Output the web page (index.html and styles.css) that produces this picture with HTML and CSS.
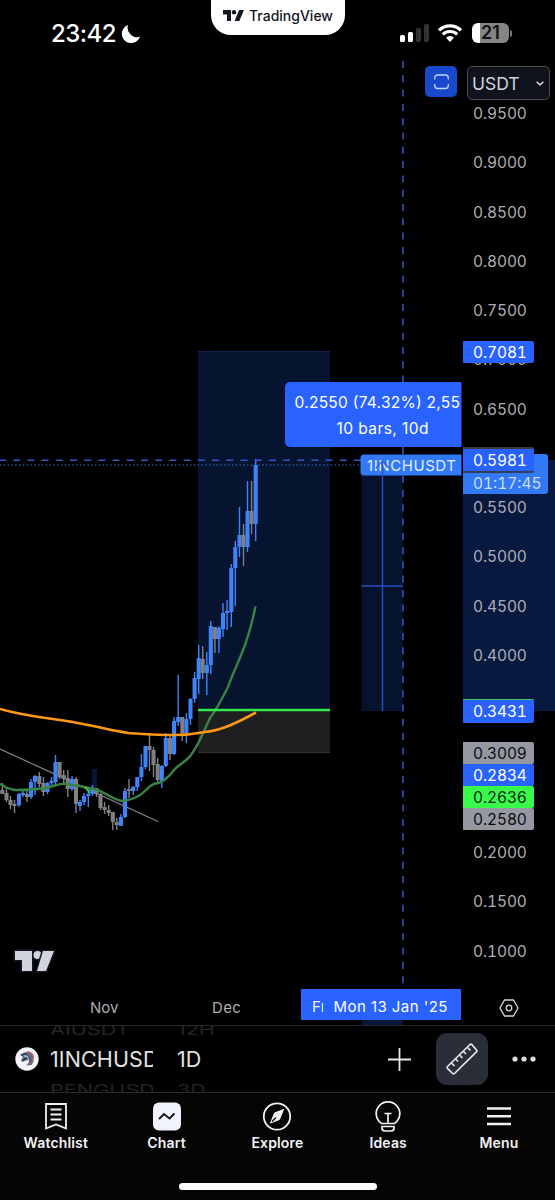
FILE: index.html
```
<!DOCTYPE html>
<html lang="en">
<head>
    <meta charset="UTF-8">
    <meta name="viewport" content="width=device-width, initial-scale=1.0">
    <title>1INCHUSDT Chart</title>
    <link rel="stylesheet" href="styles.css">
</head>
<body>
    <header class="status">
        <div class="clock">
            <span class="time">23:42</span>
            <svg width="20" height="20" viewBox="0 0 20 20"><path d="M7 1A9.3 9.3 0 1 0 19 12.600A9.400 9.400 0 0 1 7 1Z" fill="#fff"/></svg>
        </div>
        <div class="island">
            <svg width="21" height="11" viewBox="0 0 21 11" fill="#131722"><path d="M0 0H8V11H4V4.500H0Z"/><circle cx="11" cy="2.300" r="2.200"/><path d="M16 0H21L16.300 11H11.700Z"/></svg>
            <span>TradingView</span>
        </div>
        <div class="signals">
            <svg width="29" height="19" viewBox="0 0 29 19" fill="#fff"><rect x="0" y="11" width="5" height="7" rx="1.500"/><rect x="8" y="8" width="5" height="10" rx="1.500"/><rect x="16" y="4" width="5" height="14" rx="1.500" fill="#333"/><rect x="24" y="0" width="5" height="18" rx="1.500" fill="#333"/></svg>
            <svg class="wifi" width="24" height="18" viewBox="0 0 24 18" fill="none" stroke="#fff" stroke-width="3.100"><path d="M1 6.300A16 16 0 0 1 23 6.300M4.800 10.300A10.500 10.500 0 0 1 19.200 10.300"/><path d="M8 13.800Q12 10.400 16 13.800L12 18Z" fill="#fff" stroke="none"/></svg>
            <div class="battery">21</div>
            <i class="battery-tip"></i>
        </div>
    </header>

    <main class="chart">
        <svg class="plot" width="463" height="925" viewBox="0 60 463 925">
            <rect x="198" y="351" width="132" height="359" fill="#06142f"/>
            <path d="M198 351.500H330" stroke="#10224c"/>
            <rect x="198" y="710" width="132" height="43" fill="#1f1f21"/>
            <path d="M198 752.500H330" stroke="#343437"/>
            <rect x="361.500" y="460" width="41.500" height="251" fill="#06132f"/>
            <rect x="92" y="769" width="5" height="19" fill="#07163a"/>
            <path d="M0 749L158 821.500" stroke="#858589" stroke-width="1.200"/>
            <g id="candles"></g>
            <path class="ma-fast" d="M0 784C6 787 9 790 17 790C29 790 38 789 46 788C55 786 58 783 66 784C76 785 86 787 94 789C104 791 111 799 122 801C132 800 139 797 145 791C150 786 153 783 159 783C166 780 171 774 174 770C179 764 186 762 191 755C200 743 205 728 210 718C216 710 222 699 228 687C234 670 240 659 245 645C249 634 252 623 255.500 606.500"/>
            <path class="ma-slow" d="M0 709C14 713 25 715 42 717.500C60 720 70 721 88 725C103 728 114 731 128 733C145 734 159 735 174 735C185 735 190 735 205 732C222 730 237 723 256 712.500"/>
            <path d="M198 710H330" stroke="#33e84a" stroke-width="2.500"/>
            <path d="M85 787L90 793" stroke="#2bdf3c" stroke-width="1.500"/>
            <path d="M0 460.300H463" stroke="#3655c8" stroke-width="1.500" stroke-dasharray="7 7.200" stroke-dashoffset="1"/>
            <path d="M0 465H362" stroke="#3b78d0" stroke-width="1.200" stroke-dasharray="1.500 2.300"/>
            <path d="M403 61V985" stroke="#3350bd" stroke-width="1.600" stroke-dasharray="7 7.300"/>
            <path d="M465 454.500H364a3.500 3.500 0 0 0-3.500 3.500v14a3.500 3.500 0 0 0 3.500 3.500h101Z" fill="#3179f5"/>
            <text x="367" y="471" textLength="89" class="symbol-name">1INCHUSDT</text>
            <path d="M382.500 460V711M361.500 586H403" stroke="#2450c7" stroke-width="1.400" fill="none"/>
            <path d="M376 468L382.500 461L389 468" stroke="#2b62dd" stroke-width="1.400" fill="none"/>
            <path d="M465 382H290a5 5 0 0 0-5 5v55a5 5 0 0 0 5 5H465Z" fill="#2962ff"/>
            <text x="294.500" y="408" textLength="165.500" class="measure">0.2550 (74.32%) 2,55</text>
            <text x="336.500" y="434" textLength="92" class="measure">10 bars, 10d</text>
            <rect x="461.500" y="60" width="3" height="925"/>
            <g class="watermark"><path d="M15 951H32V971H22V960H15Z"/><circle cx="37.500" cy="955" r="4"/><path d="M43 951H54L46 971H37Z"/></g>
        </svg>

        <aside class="scale">
            <div class="range"></div>
            <ol class="ticks">
                <li>0.9500</li><li>0.9000</li><li>0.8500</li><li>0.8000</li><li>0.7500</li><li>0.7000</li>
                <li>0.6500</li><li></li><li>0.5500</li><li>0.5000</li><li>0.4500</li><li>0.4000</li>
                <li></li><li></li><li></li><li>0.2000</li><li>0.1500</li><li>0.1000</li>
            </ol>
            <span class="tag high">0.7081</span>
            <span class="tag countdown">01:17:45</span>
            <span class="tag cross">0.5981</span>
            <span class="tag low">0.3431</span>
            <div class="tag-stack">
                <span class="tag grey">0.3009</span>
                <span class="tag">0.2834</span>
                <span class="tag green">0.2636</span>
                <span class="tag grey">0.2580</span>
            </div>
        </aside>

        <div class="controls">
            <button class="fit" type="button">
                <svg width="15" height="16" viewBox="0 0 15 16" fill="none" stroke="#c5d2f7" stroke-width="1.300"><path d="M.7 5.500V4Q.7 1 3.700 1H11.300Q14.300 1 14.300 4V5.500M.7 10V11.500Q.7 14.500 3.700 14.500H11.300Q14.300 14.500 14.300 11.500V10"/></svg>
            </button>
            <button class="currency" type="button">
                <span>USDT</span>
                <svg width="8" height="5" viewBox="0 0 8 5" fill="none" stroke="#e0e3eb" stroke-width="1.300"><path d="M.6 .7L4 3.800L7.400 .7"/></svg>
            </button>
        </div>
    </main>

    <div class="time-axis">
        <span class="month nov">Nov</span>
        <span class="month dec">Dec</span>
        <div class="date-tag"><span class="cut">Fri</span><span>Mon 13 Jan '25</span></div>
        <svg class="settings" width="20" height="18" viewBox="0 0 20 18" fill="none" stroke="#d4d4d7" stroke-width="1.300"><path d="M5.500 1H14.500L19 9L14.500 17H5.500L1 9Z"/><circle cx="10" cy="9" r="2.800"/></svg>
        <i class="date-range"></i>
    </div>

    <div class="toolbar">
        <svg class="coin" width="24" height="24" viewBox="0 0 24 24">
            <circle cx="12" cy="12" r="11.700" fill="#f1f3f8"/>
            <path d="M5 8L9 5.500Q15 3.500 18 9Q20 14 16.500 18L11 18.500L14 15.500Q14 13 11.500 13L8 15L6 13.500L8 10Z" fill="#5c6b80"/>
            <path d="M12 5Q18 5 18.500 11M17 11Q18 14 16 17" fill="none" stroke="#c7505a" stroke-width="1.300"/>
            <path d="M6 8L11 7L14 11M9 13L13 10.500L16 14M7 14L10 11" fill="none" stroke="#1d2b42"/>
            <path d="M9 9L12 9L14 13L12 17" fill="none" stroke="#dfe5ec"/>
        </svg>
        <div class="wheel symbols"><span class="near">AIUSDT</span><span>1INCHUSDT</span><span class="near">PENGUSD</span></div>
        <div class="wheel intervals"><span class="near">12H</span><span>1D</span><span class="near">3D</span></div>
        <svg class="plus" width="23" height="23" viewBox="0 0 23 23" stroke="#e8e8ea" stroke-width="1.800"><path d="M11.500 0V23M0 11.500H23"/></svg>
        <button class="ruler" type="button">
            <svg width="32" height="32" viewBox="0 0 32 32" fill="none" stroke="#e3e5ec" stroke-width="1.700" stroke-linejoin="round"><path d="M1.500 23.500L24 1.500Q25 .7 26 1.700L30.500 7Q31.300 8 30.400 8.800L8.500 30.500Q7.500 31.500 6.600 30.500L1.500 25.300Q.7 24.400 1.500 23.500Z"/><path d="M5.500 20L8.500 23M9.500 16L12 18.500M13.500 12L16.500 15M17.500 8.500L20 11M21.500 4.500L24.500 7.500"/></svg>
        </button>
        <svg width="24" height="6" viewBox="0 0 24 6" fill="#dcdde1"><circle cx="3" cy="3" r="2.600"/><circle cx="12" cy="3" r="2.600"/><circle cx="21" cy="3" r="2.600"/></svg>
    </div>

    <nav class="tabs">
        <a class="tab">
            <svg width="30" height="32" viewBox="0 0 30 32" fill="none" stroke="#f2f2f4" stroke-width="1.800"><path d="M5 3H25V27.500L15 23.500L5 27.500ZM9.500 8.500H20.500M9.500 13.500H20.500M9.500 18.500H20.500"/></svg>
            <span>Watchlist</span>
        </a>
        <a class="tab">
            <svg width="30" height="32" viewBox="0 0 30 32" fill="none"><rect x="1" y="1.500" width="28" height="28" rx="6" fill="#f0f3fa"/><path d="M7 18L12 13L17.500 17.500L22.500 12.500" stroke="#131722" stroke-width="2"/></svg>
            <span>Chart</span>
        </a>
        <a class="tab">
            <svg width="30" height="32" viewBox="0 0 30 32" fill="none"><circle cx="15" cy="15.500" r="13.200" stroke="#f2f2f4" stroke-width="1.800"/><path d="M21.500 8.500L17.500 18.500L8.500 22L12.500 12Z" fill="#f2f2f4" stroke="#f2f2f4"/><path d="M10 20.500L14 16.500" stroke="#050505" stroke-width="1.300"/></svg>
            <span>Explore</span>
        </a>
        <a class="tab">
            <svg width="30" height="32" viewBox="0 0 30 32" fill="none" stroke="#f2f2f4" stroke-width="1.700"><path d="M8.500 22.500A11.800 11.800 0 1 1 21.500 22.500ZM11.500 12.500H18.500M15 12.500V22.500M9 25.500H21V27Q21 30 18 30H12Q9 30 9 27Z"/></svg>
            <span>Ideas</span>
        </a>
        <a class="tab">
            <svg width="30" height="32" viewBox="0 0 30 32" fill="none" stroke="#f2f2f4" stroke-width="2.400"><path d="M3 7.500H27M3 15.200H27M3 23H27"/></svg>
            <span>Menu</span>
        </a>
        <div class="home-bar"></div>
    </nav>

    <script>
        // x, body top, body bottom, wick top, wick bottom, rising
        const candles = [
            [2.3, 790, 794, 783, 794, 0], [6.5, 793, 800, 787, 802, 0], [10.5, 800, 805, 796, 809, 0],
            [14.5, 804, 806, 800, 813, 0], [19, 794, 805, 793, 807, 1], [23, 793, 795, 789, 797, 1],
            [27, 794, 797, 790, 802, 0], [31, 782, 797, 779, 799, 1], [35, 776, 782, 775, 795, 1],
            [39.3, 776, 784, 772, 787, 0], [43.4, 783, 792, 777, 796, 0], [47.5, 783, 792, 782, 794, 1],
            [51.5, 781, 783, 777, 785, 1], [55.5, 762, 782, 755, 786, 1], [59.6, 762, 777, 762, 779, 0],
            [63.7, 775, 779, 770, 783, 0], [67.8, 778, 789, 770, 797, 0], [72, 779, 789, 776, 791, 1],
            [76, 779, 804, 777, 813, 0], [80, 802, 806, 800, 811, 1], [84, 796, 802, 793, 805, 1],
            [88.3, 794, 796, 790, 807, 1], [92.4, 788, 794, 785, 796, 1], [96.5, 788, 794, 788, 797, 0],
            [100.5, 794, 808, 793, 810, 0], [104.6, 807, 810, 802, 814, 0], [108.7, 810, 813, 805, 816, 0],
            [112.8, 812, 822, 812, 830, 0], [116.8, 822, 825, 818, 830, 0], [120.9, 817, 826, 814, 826, 1],
            [125, 791, 817, 788, 818, 1], [129, 789, 791, 779, 798, 0], [133.2, 787, 791, 786, 795, 1],
            [137.3, 777, 787, 777, 791, 1], [141.4, 767, 777, 754, 781, 1], [145.5, 746, 767, 746, 769, 1],
            [149.5, 746, 750, 735, 771, 0], [153.5, 750, 765, 747, 777, 0], [157.7, 764, 780, 758, 782, 0],
            [161.8, 766, 782, 765, 788, 1], [165.8, 738, 766, 733, 767, 1], [170, 738, 754, 736, 760, 0],
            [174.1, 721, 754, 717, 755, 1], [178.2, 717, 722, 675, 726, 1], [182.3, 717, 733, 717, 741, 0],
            [186.4, 719, 733, 713, 743, 1], [190.5, 699, 719, 698, 725, 1], [194.6, 678, 699, 672, 703, 1],
            [198.7, 658, 679, 645, 694, 1], [202.7, 659, 673, 646, 679, 0], [206.8, 665, 673, 652, 695, 1],
            [210.8, 626, 665, 621, 674, 1], [214.9, 627, 639, 627, 653, 0], [218.9, 628, 639, 626, 653, 1],
            [223, 613, 629, 603, 637, 1], [227.1, 611, 613, 600, 630, 1], [231.3, 568, 612, 564, 627, 1],
            [235.3, 547, 568, 541, 606, 1], [239.5, 535, 547, 507, 557, 1], [243.5, 535, 547, 524, 566, 0],
            [247.5, 511, 547, 481, 552, 1], [251.6, 511, 524, 481, 534, 0], [255.7, 465, 524, 459, 541, 1]
        ];

        document.getElementById('candles').innerHTML = candles.map(([x, top, bottom, high, low, up]) =>
            `<g class="${up ? 'up' : 'down'}">
                <rect x="${x - 0.7}" y="${high}" width="1.4" height="${low - high}"/>
                <rect x="${x - 2.05}" y="${top}" width="4.1" height="${bottom - top}"/>
            </g>`
        ).join('');
    </script>
</body>
</html>
```
FILE: styles.css
```
* {
    box-sizing: border-box;
}
body {
    margin: 0;
    width: 555px;
    height: 1200px;
    overflow: hidden;
    background-color: #000;
    color: #fff;
    font-family: Inter, "Liberation Sans", sans-serif;
    display: flex;
    flex-direction: column;
}
svg {
    display: block;
    flex-shrink: 0;
}
button {
    border: 0;
    padding: 0;
    font-family: inherit;
}

/* status bar */
.status {
    height: 60px;
    display: grid;
    grid-template-columns: 211px 134px 210px;
}
.clock {
    display: flex;
    align-items: center;
    gap: 6px;
    padding: 7px 0 0 51px;
}
.time {
    width: 64px;
    font-size: 24px;
    font-weight: 500;
    letter-spacing: -0.5px;
}
.island {
    height: 35px;
    border-radius: 0 0 20px 20px;
    background-color: #fff;
    color: #131722;
    display: flex;
    align-items: center;
    gap: 5px;
    padding: 0 0 4px 12px;
    font-size: 14px;
    font-weight: 500;
}
.signals {
    display: flex;
    align-items: center;
    padding: 6px 0 0 55px;
}
.wifi {
    margin: 0 10px 0 9px;
}
.battery {
    width: 37px;
    height: 20px;
    border-radius: 6px;
    background: linear-gradient(90deg, #fff 8px, #858585 8px);
    color: #111;
    font-size: 18px;
    font-weight: 600;
    line-height: 20px;
    text-align: center;
}
.battery-tip {
    width: 2px;
    height: 7px;
    margin-left: 1px;
    border-radius: 0 2px 2px 0;
    background-color: #777;
}

/* chart */
.chart {
    position: relative;
    height: 925px;
    display: grid;
    grid-template-columns: 463px 92px;
}
.up {
    fill: #3f83f8;
}
.down {
    fill: #7f7f84;
}
.ma-fast {
    fill: none;
    stroke: #378445;
    stroke-width: 2.4;
}
.ma-slow {
    fill: none;
    stroke: #ff9817;
    stroke-width: 2.6;
}
.symbol-name {
    fill: #e4edff;
    font-size: 15px;
}
.measure {
    fill: #fff;
    font-size: 15.5px;
}
.watermark {
    fill: #d1d4dc;
    stroke: #131722;
    stroke-width: 3;
    paint-order: stroke;
}
.scale {
    position: relative;
    height: 925px;
    font-size: 15.5px;
    letter-spacing: -0.1px;
    font-variant-numeric: tabular-nums;
}
.ticks {
    position: relative;
    list-style: none;
    margin: 0;
    padding: 29px 0 0 10px;
    color: #acaeb4;
}
.ticks li {
    height: 49.28px;
    line-height: 49.28px;
}
.range {
    position: absolute;
    top: 400px;
    left: 0;
    width: 92px;
    height: 251px;
    background-color: #08193f;
}
.tag {
    display: block;
    width: 71px;
    height: 22px;
    padding-left: 10px;
    border-radius: 0 2px 2px 0;
    background-color: #2962ff;
    line-height: 23px;
}
.high, .countdown, .cross, .low, .tag-stack {
    position: absolute;
    left: 0;
}
.high {
    top: 281px;
}
.countdown {
    top: 394px;
    width: 85px;
    height: 40px;
    padding-top: 18px;
    border-radius: 0 3px 3px 0;
    background-color: #3179f5;
    color: #c9deff;
    letter-spacing: 0;
}
.cross {
    top: 387px;
    height: 26px;
    border-top: 2px solid #3b3d45;
    border-bottom: 2px solid #343e59;
}
.low {
    top: 639px;
    height: 24px;
    border-top: 1px solid #35c87b;
}
.tag-stack {
    top: 682px;
}
.grey {
    background-color: #9598a1;
    color: #0c0c0e;
}
.green {
    background-color: #38fa4b;
    color: #0b2a0e;
}
.controls {
    position: absolute;
    top: 6px;
    right: 5px;
    display: flex;
    gap: 10px;
}
.fit {
    width: 32px;
    height: 31px;
    border-radius: 5px;
    background-color: #1848cc;
    display: flex;
    align-items: center;
    justify-content: center;
}
.currency {
    width: 83px;
    height: 34px;
    border: 1px solid #4a4b50;
    border-radius: 5px;
    background-color: #10131c;
    color: #d1d4dc;
    font-size: 17.5px;
    display: flex;
    align-items: center;
    justify-content: space-between;
    padding: 0 5px 0 4px;
}

/* time axis */
.time-axis {
    position: relative;
    height: 40px;
    color: #acaeb4;
    font-size: 15px;
}
.month {
    position: absolute;
    top: 14px;
    line-height: 18px;
}
.nov {
    left: 90px;
}
.dec {
    left: 212px;
    letter-spacing: 0.3px;
}
.date-tag {
    position: absolute;
    z-index: 1;
    top: 4px;
    left: 301px;
    width: 160px;
    height: 31px;
    padding-left: 11px;
    background-color: #2962ff;
    color: #fff;
    line-height: 36px;
    letter-spacing: 0.45px;
    display: flex;
    white-space: nowrap;
}
.cut {
    width: 11px;
    margin-right: 10.5px;
    overflow: hidden;
}
.settings {
    position: absolute;
    top: 14px;
    left: 499px;
}
.date-range {
    position: absolute;
    top: 34px;
    left: 362px;
    width: 41px;
    height: 6px;
    background-color: #07163a;
}

/* toolbar */
.toolbar {
    height: 67px;
    border-top: 1px solid #25262b;
    display: flex;
    align-items: center;
    padding-left: 15px;
}
.wheel {
    height: 66px;
    overflow: hidden;
    display: flex;
    flex-direction: column;
    justify-content: center;
    font-size: 21.5px;
    line-height: 30px;
    white-space: nowrap;
    color: #e1e1e4;
}
.near {
    color: #242426;
    transform: scaleY(0.7);
}
.symbols {
    width: 103px;
    margin-left: 11px;
    letter-spacing: 0.1px;
}
.intervals {
    width: 80px;
    margin-left: 24px;
}
.plus {
    margin: 0 25px 0 131px;
}
.ruler {
    width: 52px;
    height: 52px;
    margin-right: 24px;
    border-radius: 11px;
    background-color: #2a2e39;
    display: flex;
    align-items: center;
    justify-content: center;
}

/* bottom tabs */
.tabs {
    position: relative;
    height: 108px;
    border-top: 1px solid #2a2a2e;
    background-color: #050505;
    display: grid;
    grid-template-columns: repeat(5, 110.8px);
    padding: 8px 0 0 0.4px;
}
.tab {
    display: flex;
    flex-direction: column;
    align-items: center;
    gap: 1px;
    font-size: 14px;
    font-weight: 600;
    line-height: 17px;
    letter-spacing: 0.15px;
    color: #f2f2f4;
}
.home-bar {
    position: absolute;
    left: 179px;
    bottom: 10px;
    width: 198px;
    height: 7px;
    border-radius: 4px;
    background-color: #fff;
}
```
